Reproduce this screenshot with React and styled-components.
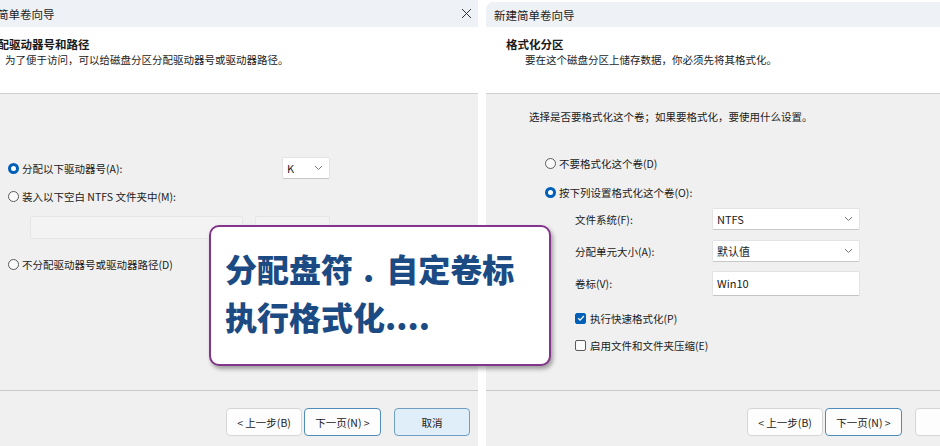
import React from 'react'
import styled, { createGlobalStyle } from 'styled-components'

const GlobalStyle = createGlobalStyle`
    html, body {
        margin: 0;
        padding: 0;
        background: #ffffff;
        overflow: hidden;
    }
    body {
        font-family: "Noto Sans CJK SC", "Noto Sans", sans-serif;
        color: #1a1a1a;
    }
`

const Stage = styled.div`
    position: relative;
    width: 940px;
    height: 446px;
    overflow: hidden;
    display: flex;
    gap: 8px;
`

const Window = styled.div`
    flex: 0 0 512px;
    margin-left: ${p => p.$shift || 0}px;
    margin-top: ${p => p.$top || 0}px;
    display: flex;
    flex-direction: column;
    height: 470px;
    background: #f0f0f0;
    border-top-left-radius: ${p => (p.$top ? 8 : 0)}px;
    overflow: hidden;
`

const TitleBar = styled.div`
    height: ${p => p.$h}px;
    flex: 0 0 auto;
    background: #eef1f6;
    display: flex;
    align-items: center;
    justify-content: space-between;
    padding: 0 6px 0 8px;
    font-size: 11.5px;
    color: #1c1c1c;
`

const CloseX = styled.svg`
    width: 11px;
    height: 11px;
`

const Header = styled.div`
    height: 67px;
    flex: 0 0 auto;
    box-sizing: border-box;
    background: #ffffff;
    border-bottom: 1px solid #cfcfcf;
    padding: 9px 0 0 20px;
`

const HeaderTitle = styled.div`
    font-size: 11.5px;
    font-weight: 700;
    line-height: 16px;
`

const HeaderSub = styled.div`
    font-size: 10.5px;
    line-height: 16px;
    padding-left: 19px;
`

const Content = styled.div`
    flex: 0 0 296px;
    display: flex;
    flex-direction: column;
    align-items: flex-start;
    padding: ${p => p.$pt}px 0 0 ${p => p.$pl}px;
    box-sizing: border-box;
    font-size: 10.5px;
`

const Footer = styled.div`
    flex: 1;
    border-top: 1px solid #c9c9c9;
    display: flex;
    align-items: flex-start;
    padding: 17px 0 0 ${p => p.$pl}px;
    gap: 2px;
`

const Button = styled.div`
    box-sizing: border-box;
    flex: 0 0 auto;
    width: ${p => p.$w || 76}px;
    height: 28px;
    display: flex;
    align-items: center;
    justify-content: center;
    font-size: 10.5px;
    border-radius: 4px;
    background: ${p => (p.$primary ? '#dfeef9' : '#fdfdfd')};
    border: 1px solid ${p => (p.$focus ? '#4f8db8' : p.$primary ? '#6f9fc4' : '#d6d6d6')};
    margin-left: ${p => p.$ml || 0}px;
`

const Row = styled.div`
    display: flex;
    align-items: center;
    height: ${p => p.$h || 18}px;
    margin-top: ${p => p.$mt || 0}px;
    margin-left: ${p => p.$ml || 0}px;
`

const RadioDot = styled.span`
    box-sizing: border-box;
    position: relative;
    width: 11px;
    height: 11px;
    border-radius: 50%;
    margin-right: 3px;
    flex: 0 0 auto;
    background: ${p => (p.$on ? '#005fb8' : '#fbfbfb')};
    border: ${p => (p.$on ? '3px solid #005fb8' : '1px solid #5a5a5a')};
    &::after {
        content: '';
        display: ${p => (p.$on ? 'block' : 'none')};
        position: absolute;
        left: 0;
        top: 0;
        width: 5px;
        height: 5px;
        border-radius: 50%;
        background: #ffffff;
    }
`

const Check = styled.span`
    box-sizing: border-box;
    width: 11px;
    height: 11px;
    border-radius: 2px;
    margin-right: 4px;
    flex: 0 0 auto;
    display: flex;
    align-items: center;
    justify-content: center;
    background: ${p => (p.$on ? '#005fb8' : '#fbfbfb')};
    border: 1px solid ${p => (p.$on ? '#005fb8' : '#5a5a5a')};
`

const Label = styled.span`
    width: ${p => p.$w || 'auto'};
    flex: 0 0 auto;
`

const Select = styled.div`
    box-sizing: border-box;
    width: ${p => p.$w}px;
    height: 22px;
    background: #ffffff;
    border: 1px solid #e3e3e3;
    border-bottom-color: #c8c8c8;
    border-radius: 2px;
    display: flex;
    align-items: center;
    justify-content: space-between;
    padding: 0 6px 0 4px;
    font-size: 11px;
    color: #1a1a1a;
`

const TextBox = styled.div`
    box-sizing: border-box;
    width: ${p => p.$w}px;
    height: ${p => p.$h || 23}px;
    background: ${p => (p.$disabled ? '#f3f3f3' : '#ffffff')};
    border: 1px solid ${p => (p.$disabled ? '#e6e6e6' : '#e3e3e3')};
    border-bottom-color: ${p => (p.$disabled ? '#e6e6e6' : '#c4c4c4')};
    border-radius: 2px;
    padding: 3px 4px 0;
    font-size: 11px;
    margin-right: ${p => p.$mr || 0}px;
`

const Callout = styled.div`
    position: absolute;
    left: 209px;
    top: 225px;
    width: 342px;
    height: 141px;
    box-sizing: border-box;
    background: #ffffff;
    border: 2px solid #83358b;
    border-radius: 10px;
    box-shadow: 2px 3px 4px rgba(0, 0, 0, 0.35);
    padding: 17px 0 0 14px;
    color: #1c4b83;
    font-family: "Noto Sans CJK SC", sans-serif;
    font-weight: 900;
    font-size: 32px;
    line-height: 48px;
    white-space: nowrap;
`

const Dot = styled.span`
    margin: 0 12px 0 10px;
`

const Chevron = () => (
    <svg width="9" height="6" viewBox="0 0 9 6">
        <path d="M1 1l3.5 3.5L8 1" fill="none" stroke="#7a7a7a" strokeWidth="1" />
    </svg>
)

const Tick = () => (
    <svg width="8" height="8" viewBox="0 0 8 8">
        <path d="M1.2 4.2l1.9 1.9L6.9 2" fill="none" stroke="#ffffff" strokeWidth="1.3" />
    </svg>
)

const Footbar = ({ pl, active }) => (
    <Footer $pl={pl}>
        <Button $w={76}>&lt; 上一步(B)</Button>
        <Button $w={77} $focus>下一页(N) &gt;</Button>
        <Button $w={active ? 76 : 84} $primary={active} $ml={11}>取消</Button>
    </Footer>
)

export default function App() {
    return (
        <>
            <GlobalStyle />
            <Stage>
                <Window $shift={-34}>
                    <TitleBar $h={27}>
                        <span>新建简单卷向导</span>
                        <CloseX viewBox="0 0 11 11">
                            <path d="M1 1l9 9M10 1l-9 9" stroke="#333" strokeWidth="1" />
                        </CloseX>
                    </TitleBar>
                    <Header>
                        <HeaderTitle>分配驱动器号和路径</HeaderTitle>
                        <HeaderSub>为了便于访问，可以给磁盘分区分配驱动器号或驱动器路径。</HeaderSub>
                    </Header>
                    <Content $pt={63} $pl={42}>
                        <Row $h={22}>
                            <RadioDot $on />
                            <Label $w="260px">分配以下驱动器号(A):</Label>
                            <Select $w={48}>
                                K <Chevron />
                            </Select>
                        </Row>
                        <Row $mt={8}>
                            <RadioDot />
                            <Label>装入以下空白 NTFS 文件夹中(M):</Label>
                        </Row>
                        <Row $h={23} $mt={11} $ml={22}>
                            <TextBox $w={213} $disabled $mr={12} />
                            <TextBox $w={75} $disabled />
                        </Row>
                        <Row $mt={16}>
                            <RadioDot />
                            <Label>不分配驱动器号或驱动器路径(D)</Label>
                        </Row>
                    </Content>
                    <Footbar pl={260} active />
                </Window>

                <Window $top={2}>
                    <TitleBar $h={25}>
                        <span>新建简单卷向导</span>
                    </TitleBar>
                    <Header>
                        <HeaderTitle>格式化分区</HeaderTitle>
                        <HeaderSub>要在这个磁盘分区上储存数据，你必须先将其格式化。</HeaderSub>
                    </Header>
                    <Content $pt={14} $pl={43}>
                        <Row $h={16}>选择是否要格式化这个卷；如果要格式化，要使用什么设置。</Row>
                        <Row $mt={30} $ml={16}>
                            <RadioDot />
                            <Label>不要格式化这个卷(D)</Label>
                        </Row>
                        <Row $mt={11} $ml={16}>
                            <RadioDot $on />
                            <Label>按下列设置格式化这个卷(O):</Label>
                        </Row>
                        <Row $h={22} $mt={7} $ml={46}>
                            <Label $w="137px">文件系统(F):</Label>
                            <Select $w={148}>
                                NTFS <Chevron />
                            </Select>
                        </Row>
                        <Row $h={22} $mt={10} $ml={46}>
                            <Label $w="137px">分配单元大小(A):</Label>
                            <Select $w={148}>
                                默认值 <Chevron />
                            </Select>
                        </Row>
                        <Row $h={25} $mt={9} $ml={46}>
                            <Label $w="137px">卷标(V):</Label>
                            <TextBox $w={148} $h={25}>Win10</TextBox>
                        </Row>
                        <Row $mt={13} $ml={46}>
                            <Check $on>
                                <Tick />
                            </Check>
                            <Label>执行快速格式化(P)</Label>
                        </Row>
                        <Row $mt={9} $ml={46}>
                            <Check />
                            <Label>启用文件和文件夹压缩(E)</Label>
                        </Row>
                    </Content>
                    <Footbar pl={261} />
                </Window>

                <Callout>
                    <div>
                        分配盘符<Dot>.</Dot>自定卷标
                    </div>
                    <div>执行格式化....</div>
                </Callout>
            </Stage>
        </>
    )
}
